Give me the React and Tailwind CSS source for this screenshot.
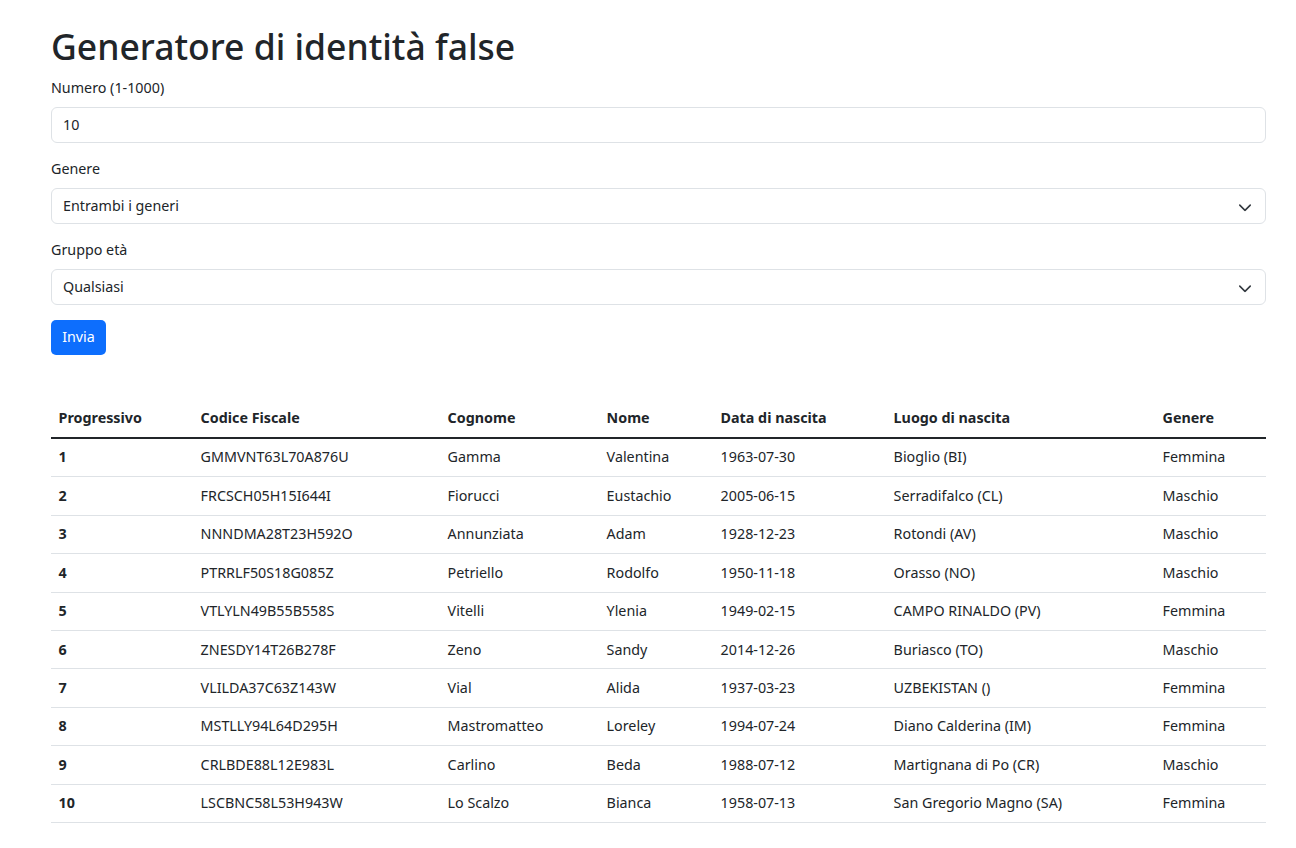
import React from 'react'

const RIGHE = [
	['1', 'GMMVNT63L70A876U', 'Gamma', 'Valentina', '1963-07-30', 'Bioglio (BI)', 'Femmina'],
	['2', 'FRCSCH05H15I644I', 'Fiorucci', 'Eustachio', '2005-06-15', 'Serradifalco (CL)', 'Maschio'],
	['3', 'NNNDMA28T23H592O', 'Annunziata', 'Adam', '1928-12-23', 'Rotondi (AV)', 'Maschio'],
	['4', 'PTRRLF50S18G085Z', 'Petriello', 'Rodolfo', '1950-11-18', 'Orasso (NO)', 'Maschio'],
	['5', 'VTLYLN49B55B558S', 'Vitelli', 'Ylenia', '1949-02-15', 'CAMPO RINALDO (PV)', 'Femmina'],
	['6', 'ZNESDY14T26B278F', 'Zeno', 'Sandy', '2014-12-26', 'Buriasco (TO)', 'Maschio'],
	['7', 'VLILDA37C63Z143W', 'Vial', 'Alida', '1937-03-23', 'UZBEKISTAN ()', 'Femmina'],
	['8', 'MSTLLY94L64D295H', 'Mastromatteo', 'Loreley', '1994-07-24', 'Diano Calderina (IM)', 'Femmina'],
	['9', 'CRLBDE88L12E983L', 'Carlino', 'Beda', '1988-07-12', 'Martignana di Po (CR)', 'Maschio'],
	['10', 'LSCBNC58L53H943W', 'Lo Scalzo', 'Bianca', '1958-07-13', 'San Gregorio Magno (SA)', 'Femmina']
]

const COLONNE = [
	['Progressivo', 'w-[142px]'],
	['Codice Fiscale', 'w-[247px]'],
	['Cognome', 'w-[159px]'],
	['Nome', 'w-[114px]'],
	['Data di nascita', 'w-[173px]'],
	['Luogo di nascita', 'w-[269px]'],
	['Genere', 'w-[111px]']
]

function Chevron() {
	return (
		<svg
			className="absolute right-[13px] top-1/2 -translate-y-1/2 w-[14px] h-[11px]"
			viewBox="0 0 16 12"
			fill="none"
			stroke="#343a40"
			strokeWidth="1.8"
			strokeLinecap="round"
			strokeLinejoin="round"
		>
			<path d="m2 5 6 6 6-6" />
		</svg>
	)
}

function Campo({ label, children }) {
	return (
		<div className="mb-[15px]">
			<div className="text-[14.3px] leading-[22.8px] mb-[7px]">{label}</div>
			{children}
		</div>
	)
}

function Select({ value }) {
	return (
		<div className="relative h-[36px] border border-[#dee2e6] rounded-[6px] bg-white flex items-center px-[11px] text-[14.3px]">
			{value}
			<Chevron />
		</div>
	)
}

export default function App() {
	return (
		<div
			className="min-h-[848px] bg-white text-[#212529] pl-[51px] pr-[30px] pt-[24px]"
			style={{ fontFamily: '"Noto Sans", "Open Sans", sans-serif' }}
		>
			<h1 className="text-[35.5px] leading-[45.6px] font-medium mb-[7.6px]">
				Generatore di identità false
			</h1>

			<Campo label="Numero (1-1000)">
				<div className="h-[36px] border border-[#dee2e6] rounded-[6px] bg-white flex items-center px-[11px] text-[14.3px]">
					10
				</div>
			</Campo>

			<Campo label="Genere">
				<Select value="Entrambi i generi" />
			</Campo>

			<Campo label="Gruppo età">
				<Select value="Qualsiasi" />
			</Campo>

			<button className="h-[35px] w-[55px] rounded-[5px] bg-[#0d6efd] text-white text-[14.3px]">
				Invia
			</button>

			{/* Tabella */}
			<table className="mt-[45px] w-[1215px] table-fixed border-collapse text-[14.3px]">
				<thead>
					<tr className="border-b-2 border-[#212529]">
						{COLONNE.map(([nome, w]) => (
							<th key={nome} className={`${w} text-left font-bold px-[7.6px] py-[7.5px] leading-[22.4px]`}>
								{nome}
							</th>
						))}
					</tr>
				</thead>
				<tbody>
					{RIGHE.map((r) => (
						<tr key={r[0]} className="border-b border-[#dee2e6]">
							{r.map((c, i) => (
								<td
									key={i}
									className={
										i === 0
											? 'px-[7.6px] py-[7.5px] leading-[22.4px] font-bold'
											: 'px-[7.6px] py-[7.5px] leading-[22.4px]'
									}
								>
									{c}
								</td>
							))}
						</tr>
					))}
				</tbody>
			</table>
		</div>
	)
}
